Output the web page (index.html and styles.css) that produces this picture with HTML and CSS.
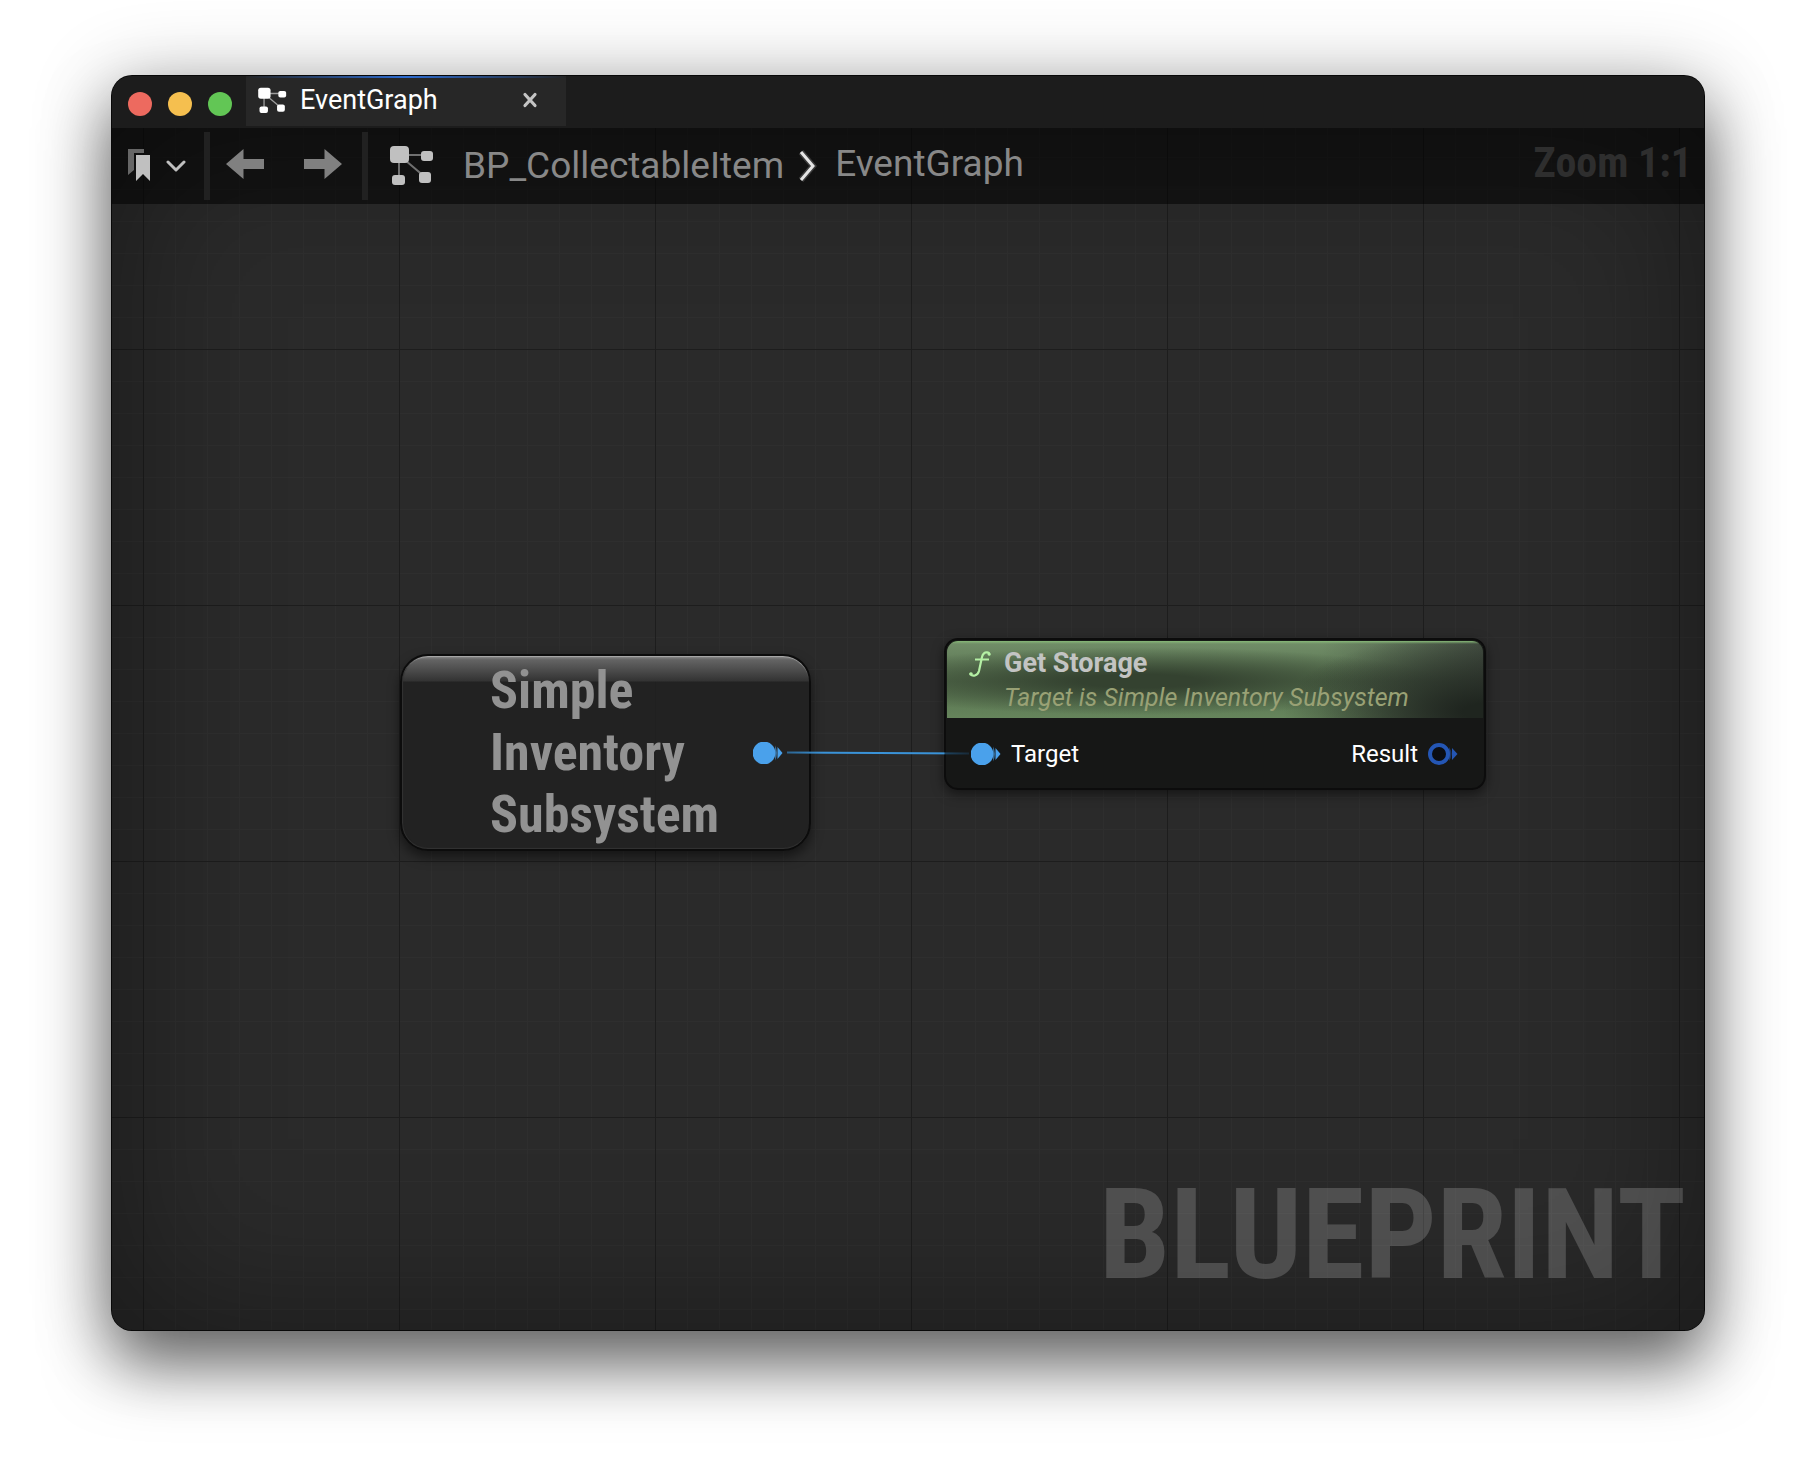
FILE: index.html
```html
<!DOCTYPE html>
<html lang="en">
<head>
<meta charset="utf-8">
<title>EventGraph</title>
<meta name="viewport" content="width=device-width, initial-scale=1">
<link rel="stylesheet" href="styles.css">
</head>
<body>
<svg class="defs" aria-hidden="true">
  <symbol id="graph" viewBox="0 0 44 40">
    <path d="M9 10v24M9 10h29M9 10l26 22" fill="none" stroke="currentColor" stroke-opacity=".55" stroke-width="2"/>
    <rect x="0" y="1" width="19" height="17" rx="4" fill="currentColor"/>
    <rect x="31" y="6" width="12" height="10" rx="3" fill="currentColor"/>
    <rect x="2" y="30" width="13" height="10" rx="3" fill="currentColor"/>
    <rect x="29" y="27" width="12" height="11" rx="3" fill="currentColor"/>
  </symbol>
  <symbol id="pin" viewBox="0 0 30 22">
    <circle cx="11" cy="11" r="11.4" fill="currentColor"/>
    <path d="M22 3.500q4 7.500 0 15z" fill="currentColor" opacity=".6"/>
    <path d="M24.500 5l5 6-5 6z" fill="currentColor"/>
  </symbol>
  <symbol id="pin-open" viewBox="0 0 30 22">
    <circle cx="11" cy="11" r="9" fill="#0b0d12" stroke="currentColor" stroke-width="4"/>
    <path d="M21 4q5 7 0 14z" fill="currentColor" opacity=".5"/>
    <path d="M24 5l5.500 6-5.500 6z" fill="currentColor"/>
  </symbol>
</svg>
<main class="window">
  <header class="titlebar">
    <div class="lights">
      <button class="light red" aria-label="Close window"></button>
      <button class="light yellow" aria-label="Minimize window"></button>
      <button class="light green" aria-label="Zoom window"></button>
    </div>
    <div class="tab">
      <svg class="tab-icon" aria-hidden="true"><use href="#graph"/></svg>
      <span class="tab-name">EventGraph</span>
      <button class="tab-close" aria-label="Close tab">
        <svg width="16" height="16" viewBox="0 0 16 16"><path d="M3 2.500l10 11M13 2.500l-10 11" stroke="#c4c4c4" stroke-width="3.200" stroke-linecap="round"/></svg>
      </button>
    </div>
  </header>
  <section class="graph">
    <nav class="toolbar">
      <button class="bookmarks" aria-label="Bookmarks">
        <svg width="24" height="34" viewBox="0 0 24 34"><path d="M0 1h16v4H6v17l-6 5z" fill="#666"/><path d="M8 7h14v26l-7-7-7 7z" fill="#c0c0c0"/></svg>
        <svg width="20" height="12" viewBox="0 0 20 12"><path d="M2 2l8 8 8-8" fill="none" stroke="#c0c0c0" stroke-width="3" stroke-linecap="round" stroke-linejoin="round"/></svg>
      </button>
      <span class="divider"></span>
      <div class="history">
        <button aria-label="Back"><svg width="38" height="30" viewBox="0 0 38 30"><path d="M0 15L17.500 0v10H38v10H17.500v10z" fill="#808080"/></svg></button>
        <button aria-label="Forward"><svg width="38" height="30" viewBox="0 0 38 30"><path d="M38 15L20.500 0v10H0v10h20.500v10z" fill="#808080"/></svg></button>
      </div>
      <span class="divider"></span>
      <div class="crumbs">
        <svg class="crumb-icon" aria-hidden="true"><use href="#graph"/></svg>
        <a href="#blueprint" class="crumb crumb-root">BP_CollectableItem</a>
        <svg class="chevron" width="20" height="32" viewBox="0 0 20 32" aria-hidden="true"><path d="M3 2l12 14L3 30" fill="none" stroke="#666" stroke-width="6" opacity=".5"/><path d="M3 2l12 14L3 30" fill="none" stroke="#e4e4e4" stroke-width="3"/></svg>
        <a href="#graph-view" class="crumb">EventGraph</a>
      </div>
      <span class="zoom">Zoom 1:1</span>
    </nav>
    <div class="watermark">BLUEPRINT</div>
    <article class="node variable-node">
      <h2 class="variable-name">Simple Inventory Subsystem</h2>
      <svg class="pin" aria-hidden="true"><use href="#pin"/></svg>
    </article>
    <article class="node function-node">
      <header class="function-head">
        <svg class="fn" width="22" height="26" viewBox="0 0 22 26" aria-hidden="true"><path d="M20.500 3.500c-.5-3-6-3.500-7.500 2.500l-3 14c-1.500 5-6.500 6-8.500 3" fill="none" stroke="#b4f0a4" stroke-width="2.200" stroke-linecap="round"/><circle cx="20" cy="3" r="1.500" fill="#b4f0a4"/><circle cx="2" cy="23" r="1.800" fill="#b4f0a4"/><path d="M6 8.500h14" stroke="#b4f0a4" stroke-width="2"/></svg>
        <h2 class="function-name">Get Storage</h2>
        <p class="function-note">Target is Simple Inventory Subsystem</p>
      </header>
      <div class="pins">
        <div class="port"><svg class="pin" aria-hidden="true"><use href="#pin"/></svg>Target</div>
        <div class="port">Result<svg class="pin open" aria-hidden="true"><use href="#pin-open"/></svg></div>
      </div>
    </article>
    <svg class="wire" width="182" height="4" viewBox="0 0 182 4" aria-hidden="true">
      <defs><linearGradient id="w" gradientUnits="userSpaceOnUse" x1="0" y1="0" x2="182" y2="0"><stop offset="0" stop-color="#2c6490"/><stop offset=".2" stop-color="#3a93d8"/><stop offset=".86" stop-color="#3a93d8"/><stop offset=".87" stop-color="#1d4360"/><stop offset="1" stop-color="#182a38"/></linearGradient></defs>
      <path d="M0 1.500C60 1.500 120 2.500 182 2.500" fill="none" stroke="url(#w)" stroke-width="2"/>
    </svg>
  </section>
</main>
</body>
</html>
```
FILE: styles.css
```css
* { box-sizing: border-box; }
body {
  margin: 0;
  min-height: 100vh;
  padding: 76px 112px 148px;
  display: flex;
  background: #fff;
  font-family: Roboto, "Liberation Sans", sans-serif;
  color: #fff;
}
button { padding: 0; border: 0; background: none; color: inherit; font: inherit; display: flex; align-items: center; }
h2, p { margin: 0; }
svg { display: block; flex: none; }
.defs { position: absolute; width: 0; height: 0; }

.window {
  flex: 1;
  min-width: 0;
  display: flex;
  flex-direction: column;
  border-radius: 20px;
  overflow: hidden;
  background: #1c1c1c;
  box-shadow: 0 0 0 1px #080808, 0 36px 64px rgba(0, 0, 0, .5), 0 8px 80px rgba(0, 0, 0, .3);
}

.titlebar { display: flex; height: 52px; padding-left: 16px; background: #1c1c1c; }
.lights { display: flex; align-items: center; gap: 16px; padding-top: 4px; }
.light { width: 24px; height: 24px; border-radius: 50%; }
.red { background: #ed6a5f; }
.yellow { background: #f5bf4f; }
.green { background: #62c655; }
.tab {
  display: flex;
  align-items: center;
  width: 320px;
  height: 50px;
  margin-left: 14px;
  padding: 0 28px 5px 12px;
  border-top: 2px solid;
  border-image: linear-gradient(90deg, #242424, #2c6bd0 50%, #242424) 1;
  border-width: 2px 0 0;
  background: #272727;
}
.tab-icon { width: 29px; height: 26px; }
.tab-name { flex: 1; margin-left: 13px; font-size: 27px; line-height: 32px; }

.graph {
  position: relative;
  flex: 1;
  min-height: 760px;
  background-color: #2a2a2a;
  background-image:
    linear-gradient(90deg, #1d1d1d 1px, transparent 1px),
    linear-gradient(#1d1d1d 1px, transparent 1px),
    linear-gradient(90deg, #2e2e2e 1px, transparent 1px),
    linear-gradient(#2e2e2e 1px, transparent 1px);
  background-size: 256px 256px, 256px 256px, 32px 32px, 32px 32px;
  background-position: 31px 221px;
  box-shadow: inset 0 0 160px rgba(0, 0, 0, .42);
}
.toolbar {
  display: flex;
  align-items: center;
  height: 76px;
  padding: 0 12px 0 16px;
  background: rgba(0, 0, 0, .52);
}
.bookmarks { gap: 14px; width: 76px; padding-bottom: 2px; }
.bookmarks svg + svg { margin-top: 2px; }
.divider { width: 6px; height: 68px; background: #212121; }
.history { display: flex; gap: 40px; width: 152px; padding-left: 16px; }
.history button { margin-bottom: 4px; }
.crumbs { display: flex; align-items: center; flex: 1; padding: 0 0 2px 22px; }
.crumb-icon { width: 44px; height: 40px; color: #c0c0c0; }
.crumb { padding-bottom: 2px; color: #888; font-size: 37px; line-height: 44px; text-decoration: none; }
.crumb-root { margin-left: 29px; padding: 2px 0 0; }
.chevron { margin: 2px 17px 0 14px; }
.zoom { padding-bottom: 6px; color: #2e2e2e; font: bold 42px/48px "Roboto Condensed", Roboto, sans-serif; }

.watermark {
  position: absolute;
  right: 18px;
  bottom: 20px;
  color: rgba(255, 255, 255, .18);
  font: bold 127px/150px "Roboto Condensed", Roboto, sans-serif;
}

.node { position: absolute; border: 2px solid #0c0c0c; }
.variable-node {
  left: 288px;
  top: 526px;
  width: 411px;
  height: 197px;
  display: flex;
  align-items: center;
  justify-content: space-between;
  padding: 0 26px 0 88px;
  border-radius: 28px;
  background:
    linear-gradient(#8a8a8a 0, #636363 4px, #333 25px, transparent 26px),
    rgba(33, 33, 33, .88);
  box-shadow: 0 6px 12px rgba(0, 0, 0, .5), inset 2px 0 1px -1px #333, inset 0 -2px 1px -1px #333, inset 0 2px 1px -1px #aaa;
}
.variable-name { width: 240px; color: #929292; font: bold 52px/62px "Roboto Condensed", Roboto, sans-serif; }
.pin { width: 30px; height: 22px; color: #4aa1eb; }
.open { color: #2456b4; }

.function-node {
  left: 832px;
  top: 510px;
  width: 542px;
  height: 152px;
  border-radius: 14px;
  overflow: hidden;
  background: rgba(22, 23, 22, .97);
  box-shadow: 0 4px 12px rgba(0, 0, 0, .5);
}
.function-head {
  display: grid;
  grid-template-columns: 35px 1fr;
  height: 78px;
  padding: 7px 0 0 22px;
  border: solid #151815;
  border-width: 1px 1px 0;
  border-radius: 12px 12px 0 0;
  background:
    linear-gradient(#86b877, rgba(134, 184, 119, 0) 3px),
    radial-gradient(ellipse 200px 80px at 100% 92%, #1f251f 10%, rgba(31, 37, 31, 0)),
    linear-gradient(90deg, rgba(60, 66, 60, 0) 70%, rgba(60, 66, 60, .8)),
    radial-gradient(ellipse 300px 34px at 36% 52%, #344230 20%, rgba(52, 66, 48, 0)),
    linear-gradient(#728f69, #56704e 40px, #66855c);
}
.fn { margin-top: 3px; }
.function-name { color: #c3c4c3; font-size: 27px; line-height: 30px; }
.function-note { grid-column: 2; color: #99a175; font-size: 25px; line-height: 36px; font-style: italic; }
.pins { display: flex; justify-content: space-between; padding: 20px 26px 0 25px; }
.port { display: flex; align-items: center; gap: 10px; font-size: 24px; line-height: 32px; }

.wire { position: absolute; left: 675px; top: 623px; }
```
